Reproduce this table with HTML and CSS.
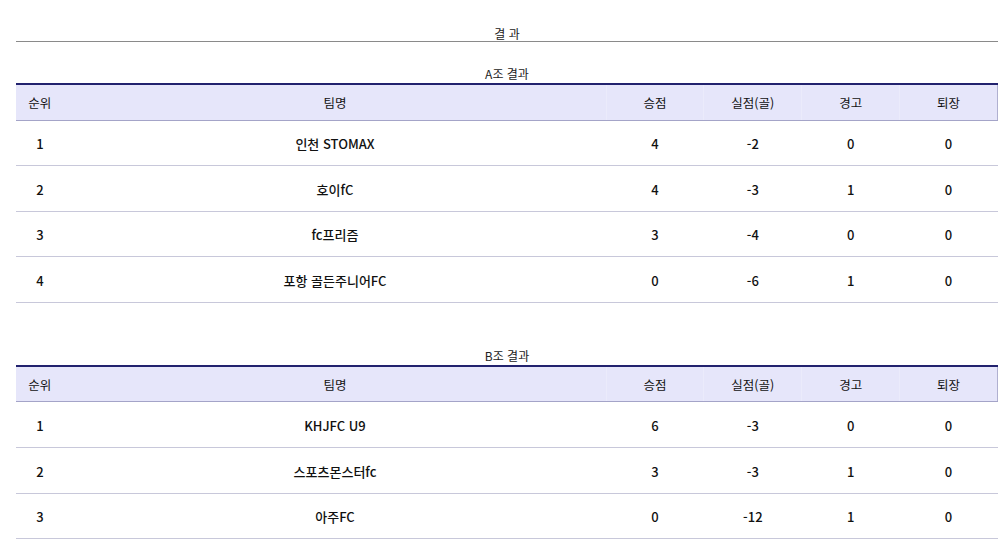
FILE: index.html
```html
<!DOCTYPE html>
<html lang="ko">
<head>
<meta charset="utf-8">
<link rel="stylesheet" href="styles.css">
</head>
<body>
<div class="page">
  <div class="page-title">결 과</div>

  <section class="group">
    <div class="group-title">A조 결과</div>
    <table class="result">
      <thead>
        <tr><th class="c-rank">순위</th><th class="c-team">팀명</th><th>승점</th><th>실점(골)</th><th>경고</th><th>퇴장</th></tr>
      </thead>
      <tbody>
        <tr><td class="c-rank">1</td><td class="c-team">인천 STOMAX</td><td>4</td><td>-2</td><td>0</td><td>0</td></tr>
        <tr><td class="c-rank">2</td><td class="c-team">호이fC</td><td>4</td><td>-3</td><td>1</td><td>0</td></tr>
        <tr><td class="c-rank">3</td><td class="c-team">fc프리즘</td><td>3</td><td>-4</td><td>0</td><td>0</td></tr>
        <tr><td class="c-rank">4</td><td class="c-team">포항 골든주니어FC</td><td>0</td><td>-6</td><td>1</td><td>0</td></tr>
      </tbody>
    </table>
  </section>

  <section class="group group-b">
    <div class="group-title">B조 결과</div>
    <table class="result">
      <thead>
        <tr><th class="c-rank">순위</th><th class="c-team">팀명</th><th>승점</th><th>실점(골)</th><th>경고</th><th>퇴장</th></tr>
      </thead>
      <tbody>
        <tr><td class="c-rank">1</td><td class="c-team">KHJFC U9</td><td>6</td><td>-3</td><td>0</td><td>0</td></tr>
        <tr><td class="c-rank">2</td><td class="c-team">스포츠몬스터fc</td><td>3</td><td>-3</td><td>1</td><td>0</td></tr>
        <tr><td class="c-rank">3</td><td class="c-team">아주FC</td><td>0</td><td>-12</td><td>1</td><td>0</td></tr>
      </tbody>
    </table>
  </section>
</div>
</body>
</html>
```

FILE: styles.css
```css
* { box-sizing: border-box; }
html, body { margin: 0; padding: 0; background: #fff; }
body {
  font-family: "Noto Sans CJK KR", "Noto Sans", sans-serif;
  color: #111;
  overflow: hidden;
}
.page {
  margin-left: 16px;
  width: 982px;
  padding-top: 26px;
}
.page-title {
  text-align: center;
  font-size: 12px;
  line-height: 15px;
  color: #222;
  border-bottom: 1px solid #8a8a8a;
}
.group { margin-top: 23px; }
.group-b { margin-top: 44px; }
.group-title {
  text-align: center;
  font-size: 12px;
  line-height: 17px;
  color: #222;
  padding-bottom: 1px;
}
.result {
  width: 100%;
  border-collapse: collapse;
  table-layout: fixed;
  border-top: 2px solid #22226e;
}
.result th {
  background: #e6e6fa;
  height: 36px;
  font-weight: 400;
  font-size: 12.5px;
  color: #111;
  text-align: center;
  border-bottom: 1px solid #a4a4c8;
  border-left: 1px solid #ebebfb;
  padding: 0;
}
.result th:first-child { border-left: none; }
.result th.c-team { border-left-color: #e6e6fa; }
.result th:last-child { border-right: 1px solid #b0b0d0; }
.result td {
  height: 45.6px;
  font-size: 13px;
  font-weight: 500;
  text-align: center;
  border-bottom: 1px solid #c8c8da;
  padding: 2px 0 0;
}
.result .c-rank { width: 48px; }
.result .c-team { width: 542px; }
```
